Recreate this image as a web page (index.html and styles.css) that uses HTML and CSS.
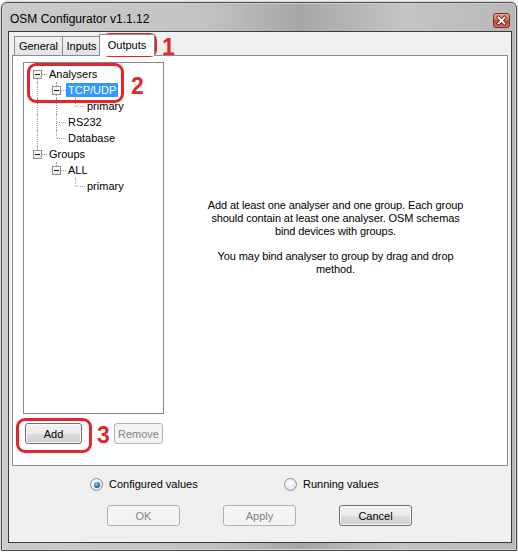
FILE: index.html
```html
<!DOCTYPE html>
<html lang="en">
<head>
    <meta charset="UTF-8">
    <title>OSM Configurator v1.1.12</title>
    <link rel="stylesheet" href="styles.css">
</head>
<body>
    <div class="window">
        <div class="titlebar">
            <span class="title">OSM Configurator v1.1.12</span>
            <span class="close">
                <svg width="15" height="13" viewBox="0 0 15 13">
                    <path d="M4.5 3.5 L10.5 9.5 M10.5 3.5 L4.5 9.5" stroke="#5a1d12" stroke-width="3.4" stroke-linecap="square"/>
                    <path d="M4.5 3.5 L10.5 9.5 M10.5 3.5 L4.5 9.5" stroke="#ffffff" stroke-width="1.8" stroke-linecap="square"/>
                </svg>
            </span>
        </div>

        <div class="client">
            <div class="tabs">
                <div class="tab tab-general">General</div>
                <div class="tab tab-inputs">Inputs</div>
                <div class="tab tab-outputs active">Outputs</div>
            </div>

            <div class="page">
                <div class="side">
                    <div class="tree">
                        <div class="node">
                            <span class="joint first"><span class="toggle"></span></span>
                            <span class="label">Analysers</span>
                        </div>
                        <div class="node">
                            <span class="gut line"></span>
                            <span class="joint mid"><span class="toggle"></span></span>
                            <span class="label sel">TCP/UDP</span>
                        </div>
                        <div class="node">
                            <span class="gut line"></span>
                            <span class="gut line"></span>
                            <span class="joint last"></span>
                            <span class="label">primary</span>
                        </div>
                        <div class="node">
                            <span class="gut line"></span>
                            <span class="joint mid"></span>
                            <span class="label">RS232</span>
                        </div>
                        <div class="node">
                            <span class="gut line"></span>
                            <span class="joint last"></span>
                            <span class="label">Database</span>
                        </div>
                        <div class="node">
                            <span class="joint last"><span class="toggle"></span></span>
                            <span class="label">Groups</span>
                        </div>
                        <div class="node">
                            <span class="gut"></span>
                            <span class="joint last"><span class="toggle"></span></span>
                            <span class="label">ALL</span>
                        </div>
                        <div class="node">
                            <span class="gut"></span>
                            <span class="gut"></span>
                            <span class="joint last"></span>
                            <span class="label">primary</span>
                        </div>
                    </div>
                    <div class="side-buttons">
                        <button class="btn btn-add">Add</button>
                        <button class="btn btn-remove" disabled>Remove</button>
                    </div>
                </div>

                <div class="info">
                    <p>Add at least one analyser and one group. Each group<br>should contain at least one analyser. OSM schemas<br>bind devices with groups.</p>
                    <p>You may bind analyser to group by drag and drop<br>method.</p>
                </div>
            </div>

            <div class="options">
                <label class="option opt-configured"><span class="radio checked"></span>Configured values</label>
                <label class="option"><span class="radio"></span>Running values</label>
            </div>

            <div class="actions">
                <button class="btn" disabled>OK</button>
                <button class="btn" disabled>Apply</button>
                <button class="btn">Cancel</button>
            </div>
        </div>
    </div>

    <!-- red call-outs drawn over the screenshot -->
    <div class="ring ring-1"></div>
    <div class="num num-1">1</div>
    <div class="ring ring-2"></div>
    <div class="num num-2">2</div>
    <div class="ring ring-3"></div>
    <div class="num num-3">3</div>
</body>
</html>
```

FILE: styles.css
```css
body {
    margin: 0;
    background-color: #ffffff;
    font-family: "Liberation Sans", Arial, sans-serif;
    font-size: 11px;
    color: #000000;
}
.window {
    box-sizing: border-box;
    width: 516px;
    height: 549px;
    margin: 2px 0 0 1px;
    display: flex;
    flex-direction: column;
    border: 1px solid #4a4a4a;
    border-radius: 6px 6px 0 0;
    background: linear-gradient(to right, #cbcbcb 0%, #c2c2c2 40%, #a6a6a6 58%, #c4c4c4 78%, #b8b8b8 100%);
    box-shadow: 0 0 4px rgba(0, 0, 0, 0.35), inset 0 0 0 1px #d4d4d4;
}
.titlebar {
    height: 28px;
    flex: none;
    display: flex;
    align-items: center;
    justify-content: space-between;
    padding: 4px 6px 0 8px;
    box-sizing: border-box;
}
.title {
    font-size: 12px;
    color: #000000;
}
.close {
    width: 15px;
    height: 13px;
    margin-top: 3px;
    border: 1px solid #7a2c1e;
    border-radius: 3px;
    background: linear-gradient(#e9a595 0%, #d6705a 48%, #c2432a 52%, #d17a62 100%);
    display: flex;
}
.client {
    flex: 1;
    margin: 0 4px 7px 6px;
    border: 1px solid #3a3a3a;
    background-color: #f0f0f0;
    padding: 2px 3px 0 3px;
    display: flex;
    flex-direction: column;
}
.tabs {
    display: flex;
    align-items: flex-end;
    height: 21px;
}
.tab {
    box-sizing: border-box;
    height: 19px;
    border: 1px solid #898c95;
    border-bottom: none;
    background: linear-gradient(#f3f3f3, #e3e3e3);
    text-align: center;
    line-height: 18px;
}
.tab-general {
    width: 49px;
    margin-left: 2px;
}
.tab-inputs {
    width: 39px;
    margin-left: -1px;
}
.tab-outputs {
    width: 56px;
    margin-left: -2px;
}
.tab.active {
    height: 22px;
    margin-bottom: -1px;
    background: #ffffff;
    line-height: 20px;
    position: relative;
    z-index: 1;
}
.page {
    height: 411px;
    box-sizing: border-box;
    border: 1px solid #898c95;
    background-color: #ffffff;
    display: flex;
}
.side {
    padding: 6px 0 0 10px;
}
.tree {
    box-sizing: border-box;
    width: 141px;
    height: 352px;
    border: 1px solid #828790;
    background-color: #ffffff;
    padding: 3px 0 0 9px;
}
.node {
    display: flex;
    align-items: center;
    height: 16px;
}
.gut {
    flex: none;
    width: 19px;
    height: 16px;
    position: relative;
}
.gut.line::before {
    content: "";
    position: absolute;
    left: 4px;
    top: 0;
    height: 16px;
    border-left: 1px dotted #a0a0a0;
}
.joint {
    flex: none;
    width: 14px;
    height: 16px;
    position: relative;
}
.joint::before {
    content: "";
    position: absolute;
    left: 4px;
    border-left: 1px dotted #a0a0a0;
}
.joint::after {
    content: "";
    position: absolute;
    left: 5px;
    top: 8px;
    width: 9px;
    border-top: 1px dotted #a0a0a0;
}
.joint.first::before {
    top: 8px;
    height: 8px;
}
.joint.mid::before {
    top: 0;
    height: 16px;
}
.joint.last::before {
    top: 0;
    height: 8px;
}
.toggle {
    position: absolute;
    left: 0;
    top: 4px;
    width: 9px;
    height: 9px;
    box-sizing: border-box;
    border: 1px solid #919191;
    background: linear-gradient(#ffffff, #ebebeb);
    z-index: 1;
}
.toggle::after {
    content: "";
    position: absolute;
    left: 1px;
    top: 3px;
    width: 5px;
    height: 1px;
    background-color: #1a1a1a;
}
.label {
    padding: 0 2px;
    height: 14px;
    line-height: 14px;
    white-space: nowrap;
}
.label.sel {
    background-color: #3399ff;
    color: #ffffff;
}
.side-buttons {
    display: flex;
    margin-top: 9px;
}
.btn {
    box-sizing: border-box;
    height: 21px;
    padding: 0;
    font-family: "Liberation Sans", Arial, sans-serif;
    font-size: 11px;
    color: #000000;
    border: 1px solid #707070;
    border-radius: 3px;
    background: linear-gradient(#f2f2f2 0%, #ebebeb 50%, #dddddd 51%, #cfcfcf 100%);
    box-shadow: inset 0 0 0 1px #fbfbfb;
}
.btn:disabled {
    color: #838383;
    border-color: #adb2b5;
    background: #f4f4f4;
    box-shadow: none;
}
.btn-add {
    width: 57px;
    margin-left: 2px;
}
.btn-remove {
    width: 49px;
    margin-left: 32px;
}
.info {
    flex: 1;
    padding-top: 143px;
    text-align: center;
    line-height: 13px;
    letter-spacing: -0.1px;
}
.info p {
    margin: 0 0 12px 0;
}
.options {
    display: flex;
    align-items: center;
    height: 13px;
    margin-top: 12px;
    padding-left: 78px;
}
.option {
    display: flex;
    align-items: center;
    gap: 6px;
    line-height: 13px;
}
.opt-configured {
    width: 194px;
}
.radio {
    width: 13px;
    height: 13px;
    box-sizing: border-box;
    border-radius: 50%;
    border: 1px solid #8c8f91;
    background: radial-gradient(circle at 40% 35%, #ffffff 0%, #e9e9e9 60%, #d4d4d4 100%);
    display: flex;
    align-items: center;
    justify-content: center;
}
.radio.checked::after {
    content: "";
    width: 6px;
    height: 6px;
    border-radius: 50%;
    background: radial-gradient(circle at 40% 35%, #8fdcff 0%, #2a7fc8 45%, #0f3f7a 100%);
}
.actions {
    display: flex;
    gap: 43px;
    margin-top: 14px;
    padding-left: 95px;
}
.actions .btn {
    width: 73px;
}
.ring {
    position: absolute;
    box-sizing: border-box;
    border: 3px solid #e3262e;
    border-radius: 9px;
}
.ring-1 {
    left: 102px;
    top: 33px;
    width: 55px;
    height: 24px;
    border-radius: 7px;
}
.ring-2 {
    left: 27px;
    top: 63px;
    width: 97px;
    height: 40px;
}
.ring-3 {
    left: 16px;
    top: 418px;
    width: 76px;
    height: 35px;
}
.num {
    position: absolute;
    font-family: "Liberation Sans", Arial, sans-serif;
    font-weight: bold;
    font-size: 23px;
    line-height: 23px;
    color: #e3262e;
}
.num-1 {
    left: 162px;
    top: 36px;
}
.num-2 {
    left: 131px;
    top: 75px;
}
.num-3 {
    left: 97px;
    top: 424px;
}
```
